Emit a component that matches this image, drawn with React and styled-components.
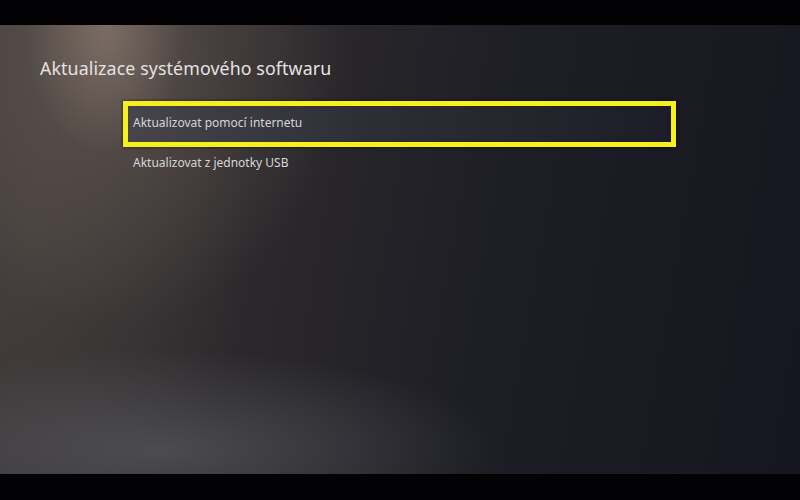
import React from "react";
import styled, { createGlobalStyle } from "styled-components";

const GlobalStyle = createGlobalStyle`
  html, body {
    margin: 0;
    padding: 0;
    background: #000;
  }
  body {
    font-family: "Noto Sans", "Open Sans", sans-serif;
  }
`;

const Frame = styled.div`
  width: 800px;
  height: 500px;
  display: flex;
  flex-direction: column;
  background: #020204;
  overflow: hidden;
`;

const Bar = styled.div`
  height: ${({ h }) => h}px;
  flex-shrink: 0;
  background: #020204;
`;

const Screen = styled.main`
  flex: 1;
  padding: 30px 0 0 40px;
  box-sizing: border-box;
  background:
    radial-gradient(ellipse 80px 130px at 105px 0px, rgba(170, 150, 135, 0.4), transparent 100%),
    radial-gradient(ellipse 240px 280px at 110px 20px, rgba(120, 105, 95, 0.55), transparent 100%),
    radial-gradient(ellipse 340px 100px at 160px 425px, rgba(90, 92, 98, 0.65), transparent 100%),
    radial-gradient(ellipse 220px 330px at 30px 200px, rgba(78, 70, 66, 0.6), transparent 100%),
    linear-gradient(100deg, #3b3637 0%, #2d2a2d 30%, #1e1e25 60%, #15161f 100%);
`;

const Title = styled.h1`
  margin: 0 0 20px;
  font-size: 17.8px;
  font-weight: 400;
  color: #e4e2e2;
  letter-spacing: 0.1px;
  line-height: 26px;
`;

const List = styled.ul`
  list-style: none;
  margin: 0;
  padding: 0 0 0 83px;
  width: 553px;
  display: flex;
  flex-direction: column;
`;

const Item = styled.li`
  height: ${({ selected }) => (selected ? 46 : 40)}px;
  box-sizing: border-box;
  display: flex;
  align-items: center;
  padding: ${({ selected }) => (selected ? "0 0 3px 5px" : "0 0 0 10px")};
  border: ${({ selected }) => (selected ? "5px solid #f6f01c" : "none")};
  background: ${({ selected }) =>
    selected
      ? "linear-gradient(90deg, #46454c 0%, #2d2d35 45%, #1c1d26 100%)"
      : "transparent"};
  box-shadow: ${({ selected }) => (selected ? "0 0 3px rgba(0,0,0,0.7)" : "none")};
  margin-bottom: ${({ selected }) => (selected ? -5 : 0)}px;
  font-size: 12px;
  color: #d6d5d8;
`;

export default function App() {
  return (
    <>
      <GlobalStyle />
      <Frame>
        <Bar h={25} />
        <Screen>
          <Title>Aktualizace systémového softwaru</Title>
          <List>
            <Item selected>Aktualizovat pomocí internetu</Item>
            <Item>Aktualizovat z jednotky USB</Item>
          </List>
        </Screen>
        <Bar h={26} />
      </Frame>
    </>
  );
}
